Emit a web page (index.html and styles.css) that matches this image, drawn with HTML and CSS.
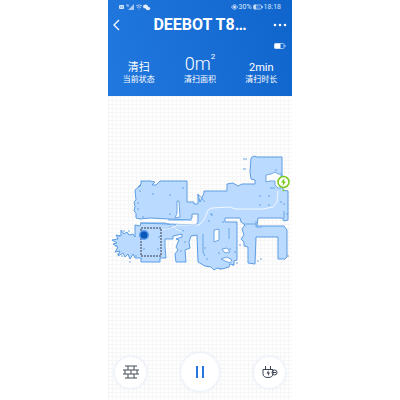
FILE: index.html
```html
<!DOCTYPE html>
<html lang="zh-CN">
<head>
  <meta charset="UTF-8">
  <meta name="viewport" content="width=device-width, initial-scale=1.0">
  <title>DEEBOT T8</title>
  <link rel="stylesheet" href="styles.css">
</head>
<body>

  <div class="phone">
    <header class="header">
      <div class="status-bar">
        <svg class="signals" viewBox="0 0 32 8" aria-hidden="true">
          <rect x="0" y="2" width="5" height="4" rx="1" fill="#d9e8fb"/>
          <path d="M1.500 3v2M3.500 3v2M1.500 4h2" stroke="#4a8de0" stroke-width=".5"/>
          <path d="M7 2h2.500M8 3h2" stroke="#b5d1f5"/>
          <path d="M9 7l6-6v6z" fill="#a8c9f3"/>
          <path d="M17 3q3-2.500 6 0M18 4.500q2-1.500 4 0M19.500 6h1" fill="none" stroke="#a8c9f3"/>
          <ellipse cx="26.500" cy="3.500" rx="2.500" ry="2" fill="#e3eefc"/>
          <ellipse cx="29" cy="5.500" rx="2.200" ry="1.700" fill="#e3eefc"/>
        </svg>
        <div class="battery-info">
          <svg class="eye" viewBox="0 0 7 6" aria-hidden="true">
            <path d="M.5 3q3-4.500 6 0q-3 4.500-6 0z" fill="none" stroke="#d9e8fb" stroke-width=".8"/>
            <circle cx="3.500" cy="3" r="1.300" fill="#d9e8fb"/>
          </svg>
          <span>30%</span>
          <svg class="phone-battery" viewBox="0 0 10 6" aria-hidden="true">
            <rect x=".5" y="1" width="8" height="4" rx="1" fill="none" stroke="#c3daf7" stroke-width=".8"/>
            <path d="M1 1h2v4h-2zM4 3h3M9 2.500h1v1h-1z" fill="#c3daf7" stroke="#c3daf7" stroke-width=".5"/>
          </svg>
          <span>18:18</span>
        </div>
      </div>

      <div class="title-bar">
        <button type="button" class="icon-btn" aria-label="返回">
          <svg width="7" height="12" viewBox="0 0 7 12"><path d="M6 1L1 6l5 5" fill="none" stroke="#fff" stroke-width="1.300"/></svg>
        </button>
        <h1>DEEBOT T8…</h1>
        <button type="button" class="icon-btn" aria-label="更多">
          <svg width="14" height="4" viewBox="0 0 14 4" fill="#fff"><circle cx="2" cy="2" r="1.300"/><circle cx="7" cy="2" r="1.300"/><circle cx="12" cy="2" r="1.300"/></svg>
        </button>
      </div>

      <div class="robot-battery">
        <svg width="12" height="6" viewBox="0 0 12 6">
          <rect x=".5" y=".5" width="9.500" height="5" rx="1" fill="none" stroke="#b5d1f5" stroke-width=".8"/>
          <path d="M.5.5h6v5h-6z" fill="#fff"/>
          <path d="M11 2v2" stroke="#b5d1f5"/>
        </svg>
      </div>

      <dl class="stats">
        <div class="stat">
          <dt>当前状态</dt>
          <dd>清扫</dd>
        </div>
        <div class="stat">
          <dt>清扫面积</dt>
          <dd class="area">0m<sup>2</sup></dd>
        </div>
        <div class="stat">
          <dt>清扫时长</dt>
          <dd>2min</dd>
        </div>
      </dl>
    </header>

    <main class="map-area">
      <svg class="map" viewBox="108 96 184 184" role="img" aria-label="地图">
        <!-- rooms -->
        <path class="rooms" d="M141 185L138 187L141 184L141 181L150 181L155 182L152 185L156 185L160 181L187 181L187 202L194 202L194 204L198 204L198 194L200 202L204 193L204 191L227 191L227 184L233 183L238 186L242 184L255 184L255 180L251 179L250 172L251 158L254 156L257 157L282 157L282 173L283 190L288 191L288 220L284 221L282 218L258 218L257 226L284 226L287 230L287 257L285 259L278 259L278 237L256 237L255 264L248 263L248 247L244 246L244 242L241 239L244 235L242 229L245 225L241 222L240 218L225 218L225 222L237 222L237 260L234 261L234 265L230 264L229 267L222 269L217 268L214 270L211 267L205 266L198 262L197 235L191 236L189 242L190 248L185 250L186 262L176 262L175 254L178 250L176 247L179 240L176 239L182 237L182 234L173 236L173 239L165 239L165 247L166 258L160 258L160 262L141 262L141 258L135 258L133 254L130 259L128 254L125 257L123 253L118 256L120 251L115 252L118 247L113 244L117 243L112 240L118 239L116 235L121 236L121 230L124 234L127 232L129 235L133 234L135 237L135 225L140 226L141 223L196 225L198 222L198 214L192 214L192 218L189 220L150 218L140 219L136 218L136 213L134 211L135 206L134 202L136 200L135 190Z"/>
        <!-- closed off spots inside the rooms -->
        <g class="gaps">
          <path d="M177 201L179 201L180 217L175 218L177 213Z"/>
          <path d="M214 230L219 229L219 240L214 242Z"/>
          <path d="M222 249L227 248L230 252L225 253Z"/>
          <path d="M221 259L227 257L232 260L230 263L225 261Z"/>
          <path d="M266 175L271 174L275 172L278 174L281 174L281 188L278 188L275 185L275 181L270 181L266 182Z"/>
        </g>
        <path class="corridor" d="M136 221L190 221L195 218"/>
        <g class="walls">
          <path d="M140 223L165 223L171 225M198 194L205 202M203 234L203 252L205 256M229 228L229 239M244 224L256 224M256 221L256 227L262 227M270 188L275 188M243 159L247 159M243 169L246 169M163 230L172 227M175 225L177 229L184 231M168 220L192 220M284 211L284 219"/>
        </g>
        <g class="specks">
          <path d="M153 194h.01M170 195h.01M170 214h.01M183 188h.01M140 191h.01M138 203h.01M138 209h.01M143 217h.01M211 214h.01M212 215h.01M209 221h.01M223 222h.01M260 196h.01M269 196h.01M260 205h.01M269 205h.01M276 170h.01M281 202h.01M284 204h.01M287 214h.01M119 236h.01M116 246h.01M124 231h.01M122 256h.01M118 254h.01M130 262h.01M136 256h.01M129 231h.01M144 249h.01M159 237h.01M158 249h.01M205 248h.01M207 259h.01M220 269h.01M235 252h.01M237 263h.01M258 261h.01M261 259h.01M233 265h.01M230 249h.01M219 253h.01M185 242h.01M181 251h.01M240 245h.01M288 256h.01"/>
        </g>
        <path class="route" d="M162 230L171 228L176 226L176 229L182 231M176 225L199 225L204 220L208 210L212 208L229 207L236 209L263 209L273 207L277 202L278 191"/>
        <rect class="zone" x="141" y="228" width="20" height="28"/>
        <circle cx="144" cy="235" r="5" fill="#5799e8"/>
        <circle cx="144" cy="235" r="3.500" fill="#0b56b9"/>
        <!-- charging dock -->
        <circle cx="283.500" cy="182" r="5.500" fill="#fff" stroke="#79c61c" stroke-width="1.500"/>
        <path d="M284.500 178l-3.500 4.500h2l-.5 3.500 3.500-4.500h-2z" fill="#79c61c"/>
        <circle cx="283.500" cy="190.500" r="1" fill="#8fd02f"/>
      </svg>

      <div class="controls">
        <button type="button" class="round-btn" aria-label="虚拟墙">
          <svg width="16" height="14" viewBox="0 0 16 14" fill="none" stroke="#444a58">
            <path d="M2 1h12M0 5h16M0 9h16M2 13h12M5 1v4M11 1v4M2 5v4M8 5v4M14 5v4M5 9v4M11 9v4"/>
          </svg>
        </button>
        <button type="button" class="round-btn" aria-label="暂停">
          <svg width="8" height="14" viewBox="0 0 8 14"><path d="M1 1v12M7 1v12" stroke="#2475dc" stroke-width="2"/></svg>
        </button>
        <button type="button" class="round-btn" aria-label="回充">
          <svg width="16" height="14" viewBox="0 0 16 14" fill="none" stroke="#3d4454">
            <path d="M3.500 1v3M8.500 1v3M1 4.500h10v4q0 4-5 4t-5-4z"/>
            <path d="M6.500 5l-2 3.500h1.500v2.500l2-3.500h-1.500z" fill="#3d4454" stroke="none"/>
            <circle cx="12.500" cy="7.500" r="2.500"/>
            <path d="M10.500 7.500h3.500"/>
          </svg>
        </button>
      </div>
    </main>
  </div>

</body>
</html>
```
FILE: styles.css
```css
* {
  box-sizing: border-box;
}
body {
  margin: 0;
  background-color: #fff;
  font-family: Roboto, "Noto Sans CJK SC", sans-serif;
}
button {
  display: flex;
  align-items: center;
  justify-content: center;
  border: none;
  padding: 0;
  cursor: pointer;
}
.phone {
  display: flex;
  flex-direction: column;
  width: 46%;
  min-height: 100vh;
  margin: 0 auto;
}

/* header */
.header {
  padding-bottom: 10px;
  background: linear-gradient(75deg, #2178de, #1065cc);
  color: #fff;
}
.status-bar {
  display: flex;
  justify-content: space-between;
  align-items: center;
  height: 13px;
  padding: 0 11px;
}
.signals {
  width: 32px;
  height: 8px;
}
.battery-info {
  display: flex;
  align-items: center;
  gap: 1px;
  font-size: 7px;
  line-height: 8px;
  color: #d9e8fb;
}
.eye {
  width: 7px;
  height: 6px;
}
.phone-battery {
  width: 10px;
  height: 6px;
}
.title-bar {
  display: flex;
  align-items: center;
  justify-content: space-between;
  height: 24px;
  padding: 0 5px;
}
.title-bar h1 {
  margin: 0;
  font-size: 16px;
  line-height: 24px;
  font-weight: 700;
}
.icon-btn {
  width: 14px;
  height: 24px;
  background: none;
}
.icon-btn:first-child {
  justify-content: flex-start;
}
.robot-battery {
  display: flex;
  justify-content: flex-end;
  padding: 6px 6px 4px;
}
.stats {
  display: grid;
  grid-template-columns: repeat(3, 1fr);
  margin: 0;
}
.stat {
  display: flex;
  flex-direction: column-reverse;
  align-items: center;
}
.stat dt {
  font-size: 8px;
  line-height: 12px;
}
.stat dd {
  margin: 0;
  font-size: 11px;
  line-height: 12px;
}
.stat .area {
  font-size: 18px;
  font-weight: 300;
  line-height: 21px;
}
.area sup {
  font-size: 8px;
  font-weight: 400;
  line-height: 8px;
  vertical-align: top;
}

/* map */
.map-area {
  display: flex;
  flex-direction: column;
  flex: 1;
  background-color: #fefefe;
  background-image:
    linear-gradient(#f6f6f6 1px, transparent 1px),
    linear-gradient(90deg, #f6f6f6 1px, transparent 1px);
  background-size: 4px 4px;
}
.map {
  display: block;
  width: 100%;
}
.rooms {
  fill: #bbdaff;
  stroke: #5c9de3;
  stroke-linejoin: round;
}
.gaps {
  fill: #fdfdfd;
  stroke: #6ba7e6;
}
.corridor {
  fill: none;
  stroke: #fdfdfd;
  stroke-width: 2px;
}
.walls {
  fill: none;
  stroke: #6ba7e6;
}
.specks {
  stroke: #5596df;
  stroke-width: 1.5px;
  stroke-linecap: round;
}
.route {
  fill: none;
  stroke: #f2f8ff;
  stroke-width: 1px;
}
.zone {
  fill: none;
  stroke: #333b4a;
  stroke-dasharray: 2 1;
}

/* bottom buttons */
.controls {
  display: flex;
  align-items: center;
  justify-content: space-between;
  margin-top: auto;
  padding: 0 7px 9px;
}
.round-btn {
  width: 31px;
  height: 31px;
  border-radius: 50%;
  background-color: #fff;
  box-shadow: 0 0 3px 1px #e6edf8;
}
.round-btn:nth-child(2) {
  width: 38px;
  height: 38px;
}
```
